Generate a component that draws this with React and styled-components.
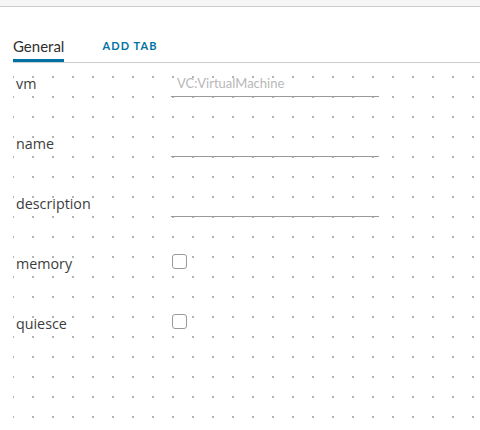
import React from "react";
import styled, { createGlobalStyle } from "styled-components";

const Global = createGlobalStyle`
  html, body { margin: 0; padding: 0; background: #fff; }
  body { font-family: "Open Sans", "Liberation Sans", sans-serif; }
  * { box-sizing: border-box; }
`;

const Page = styled.div`
  width: 480px;
  height: 430px;
  overflow: hidden;
  display: flex;
  flex-direction: column;
`;

const TopStrip = styled.div`
  height: 7px;
  flex: none;
  background: #f6f6f6;
  border-bottom: 1px solid #cccccc;
`;

const TabBar = styled.div`
  flex: none;
  margin-left: 13px;
  padding-top: 29px;
  display: flex;
  align-items: flex-end;
  gap: 38px;
  border-bottom: 1px solid #cccccc;
`;

const Tab = styled.div`
  font-family: Lato, "Open Sans", sans-serif;
  font-size: 15px;
  line-height: 20px;
  color: #2f2f2f;
  padding-bottom: 3px;
  border-bottom: 3px solid ${(p) => (p.$active ? "#0072a3" : "transparent")};
`;

const AddTab = styled.div`
  font-family: Lato, "Open Sans", sans-serif;
  font-size: 11px;
  font-weight: 700;
  letter-spacing: 1.1px;
  line-height: 20px;
  color: #0072a3;
  padding-bottom: 6px;
`;

const Canvas = styled.div`
  flex: 1;
  margin-left: 13px;
  padding-top: 8px;
  background-image: radial-gradient(circle at 1px 1px, #b4b4b4 1px, transparent 1.2px);
  background-size: 20px 20px;
  background-position: -1px 13px;
`;

const Row = styled.div`
  display: grid;
  grid-template-columns: 158px 208px;
  height: 60px;
  align-items: start;
`;

const Label = styled.div`
  font-size: 14.3px;
  line-height: 26px;
  color: #3c3c3c;
  padding-left: 3px;
`;

const TextField = styled.div`
  height: 26px;
  border-bottom: 1px solid #9a9a9a;
  padding-left: 6px;
  font-family: Lato, "Open Sans", sans-serif;
  font-size: 13px;
  line-height: 25px;
  color: #b8b8b8;
`;

const Check = styled.div`
  margin-top: 3px;
  margin-left: 1px;
  width: 15px;
  height: 15px;
  border: 1px solid #9a9a9a;
  border-radius: 3px;
  background: #fff;
`;

const fields = [
  { name: "vm", type: "text", placeholder: "VC:VirtualMachine" },
  { name: "name", type: "text", placeholder: "" },
  { name: "description", type: "text", placeholder: "" },
  { name: "memory", type: "check" },
  { name: "quiesce", type: "check" },
];

export default function App() {
  return (
    <Page>
      <Global />
      <TopStrip />
      <TabBar>
        <Tab $active>General</Tab>
        <AddTab>ADD TAB</AddTab>
      </TabBar>
      <Canvas>
        {fields.map((f) => (
          <Row key={f.name}>
            <Label>{f.name}</Label>
            {f.type === "text" ? <TextField>{f.placeholder}</TextField> : <Check />}
          </Row>
        ))}
      </Canvas>
    </Page>
  );
}
